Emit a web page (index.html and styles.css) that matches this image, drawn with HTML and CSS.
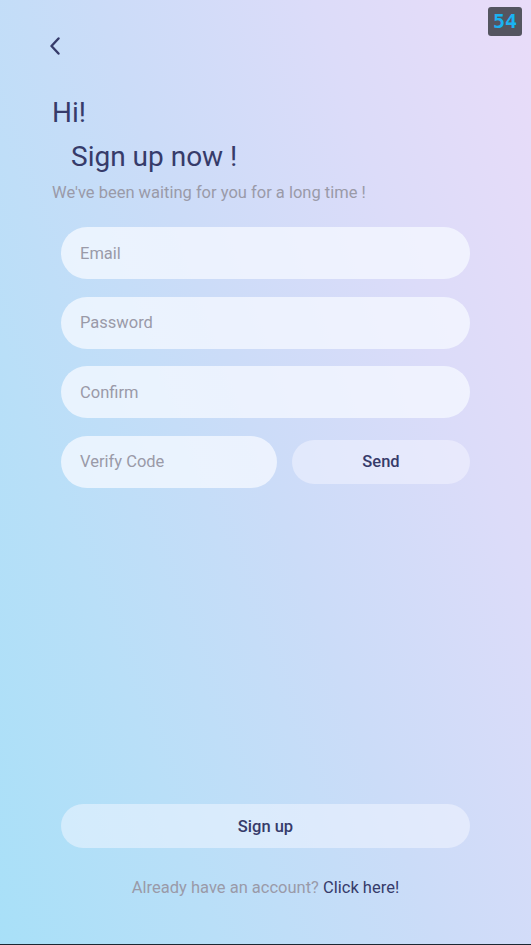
FILE: index.html
```html
<!DOCTYPE html>
<html lang="en">
<head>
<meta charset="utf-8">
<title>Sign up</title>
<link rel="stylesheet" href="styles.css">
</head>
<body>
<div class="screen">
  <div class="badge">54</div>
  <div class="topbar">
    <svg class="back" width="12" height="18" viewBox="0 0 12 18" aria-label="Back">
      <path d="M9.5 1.5 L2.5 9 L9.5 16.5" fill="none" stroke="#363b6a" stroke-width="2.4" stroke-linecap="round" stroke-linejoin="round"/>
    </svg>
  </div>
  <div class="intro">
    <h1 class="hi">Hi!</h1>
    <h2 class="title">Sign up now !</h2>
    <p class="subtitle">We've been waiting for you for a long time !</p>
  </div>
  <form class="form">
    <div class="field"><span class="ph">Email</span></div>
    <div class="field"><span class="ph">Password</span></div>
    <div class="field"><span class="ph">Confirm</span></div>
    <div class="code-row">
      <div class="field code"><span class="ph">Verify Code</span></div>
      <div class="send">Send</div>
    </div>
  </form>
  <div class="spacer"></div>
  <div class="actions">
    <div class="signup">Sign up</div>
    <p class="footer"><span class="muted">Already have an account?</span> <span class="link">Click here!</span></p>
  </div>
</div>
</body>
</html>
```
FILE: styles.css
```css
* { box-sizing: border-box; }
html, body { margin: 0; padding: 0; }
body {
  font-family: Roboto, "Liberation Sans", Arial, sans-serif;
  color: #363b6a;
}
.screen {
  position: relative;
  height: 945px;
  display: flex;
  flex-direction: column;
  background: linear-gradient(70deg, #a8e0f8 0%, #b9dff8 25%, #cbdcf8 50%, #dcdcf9 75%, #e9dcf9 100%);
  border-bottom: 1px solid #1d2733;
}
.badge {
  position: absolute;
  top: 7px;
  right: 9px;
  width: 34px;
  height: 29px;
  border-radius: 3px;
  background: #545560;
  color: #1ab2f2;
  font-family: "DejaVu Sans Mono", "Liberation Mono", monospace;
  font-weight: bold;
  font-size: 20px;
  line-height: 29px;
  text-align: center;
}
.topbar {
  padding: 37px 0 0 49px;
  height: 55px;
}
.back { display: block; }
.intro {
  padding: 0 52px;
  margin-top: 36px;
}
.hi, .title {
  margin: 0;
  font-weight: 400;
  font-size: 28px;
  line-height: 44px;
  color: #363b6a;
}
.title { padding-left: 19px; }
.subtitle {
  margin: 4px 0 0;
  font-size: 16.5px;
  line-height: 20px;
  color: #9a9aa8;
}
.form {
  margin: 24px 0 0;
  padding: 0 61px;
  display: flex;
  flex-direction: column;
  gap: 17.67px;
}
.field {
  height: 52px;
  border-radius: 26px;
  background: rgba(245, 248, 255, 0.78);
  display: flex;
  align-items: center;
  padding-left: 19px;
}
.ph {
  font-size: 16.5px;
  color: #9a9aa8;
}
.code-row {
  display: flex;
  align-items: center;
  gap: 15px;
}
.code { width: 216px; flex: none; }
.send {
  flex: 1;
  height: 44px;
  border-radius: 22px;
  background: rgba(245, 246, 255, 0.5);
  display: flex;
  align-items: center;
  justify-content: center;
  font-size: 16.5px;
  font-weight: 500;
  color: #363b6a;
}
.spacer { flex: 1; }
.actions {
  padding: 0 61px;
  margin-bottom: 46px;
}
.signup {
  height: 44px;
  border-radius: 22px;
  background: rgba(245, 248, 255, 0.5);
  display: flex;
  align-items: center;
  justify-content: center;
  font-size: 16.5px;
  font-weight: 500;
  color: #363b6a;
}
.footer {
  margin: 30px 0 0;
  text-align: center;
  font-size: 16.5px;
  line-height: 20px;
}
.muted { color: #9a9aa8; }
.link { color: #363b6a; }
```
